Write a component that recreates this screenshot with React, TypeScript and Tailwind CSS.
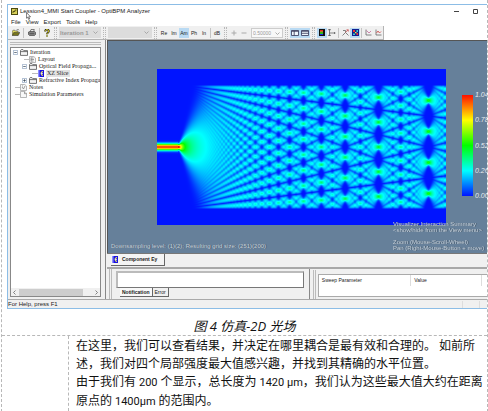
import { useEffect, useRef, type ReactNode } from "react";

const PLOT_W = 289;
const PLOT_H = 156;

// jet-like palette, v in 0..1
const STOPS = [
  [0, 20, 255],
  [0, 255, 255],
  [0, 255, 0],
  [255, 255, 0],
  [255, 16, 0],
];

function palette(v: number) {
  const t = Math.min(Math.max(v, 0), 0.9999) * 4;
  const i = Math.floor(t);
  return STOPS[i].map((c, k) => c + (STOPS[i + 1][k] - c) * (t - i));
}

// Sum of the symmetric guide modes, one picture column per z step
function drawField(ctx: CanvasRenderingContext2D) {
  const img = ctx.createImageData(PLOT_W, PLOT_H);
  const width = 124;
  const start = 21;
  const imageLength = 1000;
  const center = 78;
  const modes = 34;
  const weights = Array.from({ length: modes }, (_, k) =>
    Math.exp(-Math.pow(((2 * k + 1) * Math.PI * 2.8) / width, 2) / 4)
  );
  const total = weights.reduce((a, b) => a + b, 0);

  for (let x = 0; x < PLOT_W; x++) {
    for (let y = 0; y < PLOT_H; y++) {
      const dy = y + 0.5 - center;
      let amp = 0;
      if (x < start) {
        amp = 0.94 * Math.exp(-Math.pow(Math.abs(dy) / 3.4, 2.4));
      } else if (Math.abs(dy) < width / 2) {
        let re = 0;
        let im = 0;
        for (let k = 0; k < modes; k++) {
          const phase = (Math.PI * k * (k + 1) * (x - start)) / imageLength;
          const a = weights[k] * Math.cos(((2 * k + 1) * Math.PI * dy) / width);
          re += a * Math.cos(phase);
          im += a * Math.sin(phase);
        }
        amp = (1.04 * Math.hypot(re, im)) / total;
      }
      const [r, g, b] = palette(amp);
      const o = (y * PLOT_W + x) * 4;
      img.data[o] = r;
      img.data[o + 1] = g;
      img.data[o + 2] = b;
      img.data[o + 3] = 255;
    }
  }
  ctx.putImageData(img, 0, 0);
}

function FieldPlot() {
  const ref = useRef<HTMLCanvasElement>(null);
  useEffect(() => {
    const ctx = ref.current?.getContext("2d");
    if (ctx) drawField(ctx);
  }, []);
  return (
    <canvas
      ref={ref}
      width={PLOT_W}
      height={PLOT_H}
      role="img"
      aria-label="XZ slice of the optical field"
      className="block h-[156px] min-w-0 flex-1 bg-[#0014ff]"
    />
  );
}

function Grip() {
  return <span className="mx-[2px] h-3 w-[3px] shrink-0 border-x border-dotted border-[#b8b8b8]" />;
}

function Sep() {
  return <span className="mx-px h-[10px] w-px shrink-0 bg-[#c4c4c4]" />;
}

function Tool({ label, on, children }: { label: string; on?: boolean; children: ReactNode }) {
  return (
    <button
      aria-label={label}
      className={
        "flex h-[10px] w-[10px] shrink-0 items-center justify-center text-[5px] text-[#222] " +
        (on ? "bg-[#b9daf3]" : "")
      }
    >
      {children}
    </button>
  );
}

function Chevron() {
  return (
    <svg className="pointer-events-none absolute right-[3px] top-1 h-[3px] w-[5px]" viewBox="0 0 5 3" fill="none" stroke="#999">
      <path d="M.5 .5l2 2 2-2" strokeWidth=".8" />
    </svg>
  );
}

function FolderIcon() {
  return (
    <svg className="h-[7px] w-2 shrink-0" viewBox="0 0 8 7" fill="#f4f4f4" stroke="#555" strokeWidth=".8">
      <path d="M.5 6.4V1.5L1.2.6H3l.8 1h3.7v4.8z" />
      <path d="M.5 2.6h7" />
    </svg>
  );
}

function PageIcon({ kind }: { kind: string }) {
  return (
    <svg className="h-[7px] w-[7px] shrink-0" viewBox="0 0 7 7" fill="#f8f8f8" stroke="#999" strokeWidth=".7">
      <path d="M.5.5h4.3l1.7 1.6v4.4h-6z" />
      {kind === "layout" && <path d="M2 1.5v4M2 2h2.5M2 3.5h3M2 5h2.5" stroke="#777" />}
      {kind === "notes" && <path d="M2 3l1.5 2L5 2M2 2h1" stroke="#777" />}
      {kind === "params" && <path d="M4.5.7v2h2" stroke="#777" />}
    </svg>
  );
}

function SliceIcon() {
  return (
    <svg className="h-[7px] w-[6px] shrink-0" viewBox="0 0 6 7">
      <path fill="#1a12e0" d="M0 0h6v7H0z" />
      <path fill="#8c8cff" d="M0 0h1.5v7H0z" />
      <path d="M5 1.6a1.9 1.9 0 1 0 0 3.8" fill="none" stroke="#f2ec60" strokeWidth="1.1" />
      <path d="M3 3.5h2" stroke="#fff" strokeWidth=".7" />
    </svg>
  );
}

function Expander({ open }: { open: boolean }) {
  return (
    <svg className="h-[5px] w-[5px] shrink-0" viewBox="0 0 5 5" fill="#fff" stroke="#8ba0bd" strokeWidth=".7">
      <path d="M.4.4h4.2v4.2H.4z" />
      <path d="M1.2 2.5h2.6" stroke="#345" />
      {!open && <path d="M2.5 1.2v2.6" stroke="#345" />}
    </svg>
  );
}

function Tree() {
  const row = "flex h-[7px] items-center gap-[2px] whitespace-nowrap";
  return (
    <ul className="flex-1 overflow-hidden pt-px font-['Liberation_Serif',serif] text-[6px] leading-[7px] text-[#222]">
      <li className={row + " pl-[2px]"}>
        <Expander open />
        <FolderIcon />
        Iteration
      </li>
      <li className={row + " pl-[13px]"}>
        <span className="-mr-[2px] h-px w-[5px] bg-[#bbb]" />
        <PageIcon kind="layout" />
        Layout
      </li>
      <li className={row + " pl-[11px]"}>
        <Expander open />
        <FolderIcon />
        Optical Field Propaga...
      </li>
      <li className={row + " pl-[21px]"}>
        <span className="-mr-[2px] h-px w-[6px] bg-[#bbb]" />
        <SliceIcon />
        <span className="bg-[#e2e2e2] px-px">XZ Slice</span>
      </li>
      <li className={row + " pl-[11px]"}>
        <Expander open={false} />
        <FolderIcon />
        Refractive Index Propaga
      </li>
      <li className={row + " pl-[4px]"}>
        <span className="-mr-[2px] h-px w-[5px] bg-[#bbb]" />
        <PageIcon kind="notes" />
        Notes
      </li>
      <li className={row + " pl-[4px]"}>
        <span className="-mr-[2px] h-px w-[5px] bg-[#bbb]" />
        <PageIcon kind="params" />
        Simulation Parameters
      </li>
    </ul>
  );
}

function Toolbar() {
  return (
    <div className="flex">
      <div className="flex h-[14px] items-center border-b border-r border-[#b4b4b4] bg-[#f0f0f0]">
        <div className="flex w-11 shrink-0 items-center justify-between pl-[3px]">
          <Tool label="Open">
            <svg className="h-[7px] w-2" viewBox="0 0 8 7">
              <path d="M.3 6.5V2l.8-.8h1.7l.7.8H6v1.2" fill="#e8e060" stroke="#333" strokeWidth=".5" />
              <path d="M.3 6.5L1.8 3.4h6L6.2 6.5z" fill="#77751c" stroke="#222" strokeWidth=".5" />
              <path d="M4.5 1C5.5 0 6.5.2 7 1.3" fill="none" stroke="#222" strokeWidth=".5" />
            </svg>
          </Tool>
          <Sep />
          <Tool label="Print">
            <svg className="h-[7px] w-2" viewBox="0 0 8 7" stroke="#333" strokeWidth=".6">
              <path d="M.5 3L2 2.5h4.5l1 .8v2.2l-1 1h-5l-1-1z" fill="#888" />
              <path d="M2.2 2.6L3 .5h3.3l-.7 2.1z" fill="#eee" />
              <path d="M1.5 4.7h4.8" />
            </svg>
          </Tool>
          <Sep />
          <Tool label="About">
            <svg className="h-2 w-[6px]" viewBox="0 0 6 8" fill="none">
              <path d="M1.2 2.4C1.2 0 4.8.1 4.8 2.2 4.8 3.6 3 3.4 3 5.2" stroke="#222" strokeWidth="2" />
              <path d="M1.2 2.4C1.2 0 4.8.1 4.8 2.2 4.8 3.6 3 3.4 3 5.2" stroke="#e8dc20" strokeWidth="1" />
              <path d="M2.2 6.2h1.6v1.5H2.2z" fill="#777510" />
            </svg>
          </Tool>
        </div>
        <Grip />
        <span className="relative flex">
          <select
            aria-label="Iteration"
            className="h-[11px] w-[42px] appearance-none rounded-none bg-[#dcdcdc] pl-px text-[6px] font-bold leading-[10px] text-[#999]"
          >
            <option>Iteration 1</option>
          </select>
          <Chevron />
        </span>
        <Grip />
        <span className="relative flex">
          <select aria-label="Component" className="h-[11px] w-11 appearance-none rounded-none bg-[#dcdcdc] text-[6px]">
            <option> </option>
          </select>
          <Chevron />
        </span>
        <Grip />
        <Tool label="Real">Re</Tool>
        <Tool label="Imaginary">Im</Tool>
        <Tool label="Amplitude" on>
          Am
        </Tool>
        <Tool label="Phase">Ph</Tool>
        <Tool label="Intensity">In</Tool>
        <Sep />
        <Tool label="Decibel">dB</Tool>
        <Grip />
        <Tool label="Increase">
          <svg className="h-[6px] w-[6px]" viewBox="0 0 6 6" stroke="#aaa">
            <path d="M3 .5v5M.5 3h5" />
          </svg>
        </Tool>
        <Tool label="Decrease">
          <svg className="h-[6px] w-[6px]" viewBox="0 0 6 6" stroke="#aaa">
            <path d="M.5 3h5" />
          </svg>
        </Tool>
        <span className="relative ml-[2px] flex">
          <select
            aria-label="Step"
            className="h-[10px] w-8 appearance-none rounded-none border border-[#ccc] bg-[#f8f8f8] pl-px text-[5px] leading-[8px] text-[#999]"
          >
            <option>0.50000</option>
          </select>
          <Chevron />
        </span>
        <Grip />
        <Tool label="Tree pane" on>
          <svg className="h-[6px] w-2" viewBox="0 0 8 6" fill="#eef6fc" stroke="#335" strokeWidth=".8">
            <path d="M.5.5h7v5h-7zM3.2 1v4.5M.5 1.3h7" />
          </svg>
        </Tool>
        <Tool label="Output pane" on>
          <svg className="h-[6px] w-2" viewBox="0 0 8 6" fill="#eef6fc" stroke="#335" strokeWidth=".8">
            <path d="M.5.5h7v5h-7zM.5 3.3h7M.5 1.3h7" />
          </svg>
        </Tool>
        <Grip />
        <Tool label="Legend" on>
          <svg className="h-[7px] w-[6px]" viewBox="0 0 6 7">
            <path fill="#111" d="M0 0h6v7H0z" />
            <path fill="#e22" d="M1 1h3v1.5H1z" />
            <path fill="#ee2" d="M1 2.5h3v1H1z" />
            <path fill="#2c2" d="M1 3.5h3V5H1z" />
            <path fill="#22e" d="M1 5h3v1H1z" />
          </svg>
        </Tool>
        <Tool label="Axes">
          <svg className="h-[7px] w-2" viewBox="0 0 8 7" stroke="#555" strokeWidth=".7">
            <path d="M1.5 0v7M0 .7h3M0 6.4h3M1.5 4h6M6.5 3v2" />
          </svg>
        </Tool>
        <Sep />
        <Tool label="Cut view">
          <svg className="h-[7px] w-[7px]" viewBox="0 0 7 7" fill="none" stroke="#666" strokeWidth=".8">
            <path d="M.5 6.5l3-3 3 3M1 1.5h2.5v2" />
            <path d="M3.5 3.5L6 .8M4.5.8H6.3V2.6" stroke="#c55" />
          </svg>
        </Tool>
        <Tool label="Image map" on>
          <svg className="h-[7px] w-[7px]" viewBox="0 0 7 7">
            <path fill="#102090" d="M0 0h7v7H0z" />
            <path fill="#e33" d="M1 1h2v2H1zM4.5 4h1.5v2H4.5z" />
            <path fill="#3cc" d="M4.5 1H6v2H4.5zM1 4.5h2V6H1z" />
            <path fill="#ee4" d="M3 3h1.5v1.3H3z" />
          </svg>
        </Tool>
        <Sep />
        <Tool label="X profile">
          <svg className="h-[7px] w-[7px]" viewBox="0 0 7 7" fill="none" stroke="#666" strokeWidth=".8">
            <path d="M1 .5V6h5.5" />
            <path d="M1.5 1.5L4 4l2-2" stroke="#c46a9a" />
          </svg>
        </Tool>
        <Tool label="Z profile">
          <svg className="h-[7px] w-[7px]" viewBox="0 0 7 7" fill="none" stroke="#666" strokeWidth=".8">
            <path d="M1 .5V6h5.5" />
            <path d="M1.5 4L3 2l1.5 2L6 2.5" stroke="#c44" />
          </svg>
        </Tool>
      </div>
    </div>
  );
}

function Viewport() {
  const hint = "absolute text-[6px] leading-[6px] text-[#c4ced8] whitespace-nowrap [text-shadow:1px_0_#4b5c6d]";
  return (
    <div className="relative flex h-[213px] items-start overflow-hidden border-l border-t border-[#555] bg-[#66809a] pl-[49px] pt-7">
      <FieldPlot />
      <div className="ml-4 mt-[26px] h-[101px] w-[11px] shrink-0 bg-[linear-gradient(#ff1000,#ffff00_25%,#00ff00_50%,#00ffff_75%,#0014ff)]" />
      <div className="ml-[2px] mt-[21px] flex h-[110px] w-3 shrink-0 flex-col justify-between overflow-hidden text-[7px] italic leading-[9px] text-[#e6ebef]">
        <span>1.04</span>
        <span>0.78</span>
        <span>0.52</span>
        <span>0.26</span>
        <span>0.00</span>
      </div>
      <p className={hint + " bottom-1 left-[3px]"}>Downsampling level: (1)(2); Resulting grid size: (251)(200)</p>
      <p className={hint + " bottom-[2px] right-2 w-[86px]"}>
        Visualizer Interaction Summary
        <br />
        &lt;show/hide from the View menu&gt;
        <br />
        <br />
        Zoom (Mouse-Scroll-Wheel)
        <br />
        Pan (Right-Mouse-Button + move)
      </p>
    </div>
  );
}

function AnalyzerWindow() {
  return (
    <div className="ml-[5px] overflow-hidden border-y border-l border-[#8cbde6] bg-white font-['Liberation_Sans',Arial,sans-serif] text-[6px] leading-[8px] text-[#222]">
      {/* Title bar */}
      <div className="flex h-3 items-center pl-[3px]">
        <svg className="h-[7px] w-[7px]" viewBox="0 0 7 7">
          <path fill="#4b4a12" d="M0 0h7v7H0z" />
          <path fill="#d8d05a" d="M1 1h5v5H1z" />
          <path d="M2 5V3.5h2V2h1.5" fill="none" stroke="#4b4a12" strokeWidth=".9" />
        </svg>
        <span className="ml-[2px] flex-1">Lession4_MMI Start Coupler - OptiBPM Analyzer</span>
        <button aria-label="Minimize" className="mr-[14px]">
          <svg className="h-[5px] w-[5px]" viewBox="0 0 5 5" stroke="#444">
            <path d="M0 2.5h5" />
          </svg>
        </button>
        <button aria-label="Maximize" className="mr-[9px]">
          <svg className="h-[5px] w-[5px]" viewBox="0 0 5 5" stroke="#444" fill="none">
            <path d="M.5.5h4v4h-4z" />
          </svg>
        </button>
      </div>

      {/* Menu bar, with the pointer over it */}
      <nav className="relative flex h-[9px] items-center gap-[5px] pl-[3px]">
        {["File", "View", "Export", "Tools", "Help"].map((item) => (
          <button key={item} className="leading-[8px]">
            {item}
          </button>
        ))}
        <svg className="absolute -top-[5px] left-[18px] h-2 w-[5px]" viewBox="0 0 5 8" fill="#fff" stroke="#222" strokeWidth=".6">
          <path d="M.4.5v5.7l1.3-1.1.9 2.3 1-.4-.9-2.2h1.8z" />
        </svg>
      </nav>

      <Toolbar />

      <div className="flex bg-[#f0f0f0]">
        {/* Left dock */}
        <div className="flex w-[98px] shrink-0 flex-col border-r border-[#888] pl-[2px] pr-1 pt-[2px]">
          <div className="mb-[2px] h-[3px] border-y border-[#bbb]" />
          <div className="flex flex-1 flex-col border border-[#888] bg-white">
            <Tree />
            <div className="flex h-2 items-center justify-between bg-[#f0f0f0] px-[2px] text-[#666]">
              <svg className="h-[5px] w-[3px]" viewBox="0 0 3 5" fill="none" stroke="#666" strokeWidth=".8">
                <path d="M2.5.5l-2 2 2 2" />
              </svg>
              <span className="ml-[3px] mr-3 h-[7px] flex-1 bg-[#cdcdcd]" />
              <svg className="h-[5px] w-[3px]" viewBox="0 0 3 5" fill="none" stroke="#666" strokeWidth=".8">
                <path d="M.5.5l2 2-2 2" />
              </svg>
            </div>
          </div>
          <div className="h-[2px]" />
        </div>

        <div className="min-w-0 flex-1 pl-px">
          <Viewport />
          <div className="h-4 border-b-2 border-t border-b-[#a8a8a8] border-t-[#777] pl-1">
            <button className="flex h-3 items-center gap-1 border-b border-r border-[#666] bg-[#f4f4f4] pl-px pr-[7px] text-[5px] font-bold leading-[9px]">
              <SliceIcon />
              Component Ey
            </button>
          </div>

          <div className="flex h-[30px]">
            <div className="flex min-w-0 flex-[10] border-r border-[#888] pr-[5px]">
              <span className="ml-[2px] mr-[4px] w-[3px] border-x border-[#bbb]" />
              <div className="flex-1 pt-[2px]">
                <input
                  aria-label="Notification output"
                  readOnly
                  className="block h-[17px] w-full border-b border-l-2 border-r border-t-2 border-[#bbb] border-b-[#777] border-r-[#777] bg-white"
                />
                <div className="flex pl-1 text-[5px] leading-[8px]">
                  <button className="h-[9px] border-b border-r border-[#666] bg-[#f8f8f8] px-[2px] text-[5px] font-bold leading-[8px]">
                    Notification
                  </button>
                  <button className="h-[9px] border-b border-r border-[#666] px-[2px] leading-[8px]">Error</button>
                </div>
              </div>
            </div>
            <div className="flex min-w-0 flex-[9] pt-px">
              <span className="ml-[3px] mr-[2px] w-[3px] border-x border-[#bbb]" />
              <div className="mb-[2px] mt-1 min-w-0 flex-1 border border-r-0 border-[#aaa] bg-white">
                <table className="w-full table-fixed text-left text-[5px] leading-[11px]">
                  <thead>
                    <tr>
                      <th className="w-[92px] border-r border-[#ddd] pl-[3px] font-normal">Sweep Parameter</th>
                      <th className="border-r border-[#ddd] pl-[3px] font-normal">Value</th>
                      <th className="w-[6px]" />
                    </tr>
                  </thead>
                </table>
              </div>
            </div>
          </div>
        </div>
      </div>

      {/* Status bar */}
      <div className="flex h-[9px] items-center border-t border-[#aaa] bg-[#f0f0f0]">
        <span className="flex-1 leading-[8px]">For Help, press F1</span>
        <span className="mr-[7px] h-[7px] w-[18px] border-x border-[#ddd]" />
      </div>
    </div>
  );
}

function Num({ children }: { children: ReactNode }) {
  return <span className="text-[11px]">{children}</span>;
}

export default function App() {
  return (
    <main className="ml-px border-x border-b border-dashed border-[#b8b8b8] bg-white pt-1 font-[Roboto,'Noto_Sans_CJK_SC',sans-serif] text-[12px] text-[#111]">
      <figure>
        <AnalyzerWindow />
        <figcaption className="h-[26px] pt-1 text-center font-['Open_Sans','Noto_Sans_CJK_SC',sans-serif] text-[13px] italic leading-[26px]">
          图 4 仿真-2D 光场
        </figcaption>
      </figure>
      <div className="flex border-t border-dashed border-[#b8b8b8]">
        <div className="w-[67px] shrink-0 border-r border-dashed border-[#b8b8b8]" />
        <div className="min-w-0 flex-1 pl-[7px] pt-px leading-[18px]">
          <p>
            在这里，我们可以查看结果，并决定在哪里耦合是最有效和合理的。 如前所述，我们对四个局部强度最大值感兴趣，并找到其精确的水平位置。
          </p>
          <p>
            由于我们有 <Num>200</Num> 个显示，总长度为 <Num>1420 μm</Num>，我们认为这些最大值大约在距离原点的{" "}
            <Num>1400μm</Num> 的范围内。
          </p>
        </div>
      </div>
    </main>
  );
}
